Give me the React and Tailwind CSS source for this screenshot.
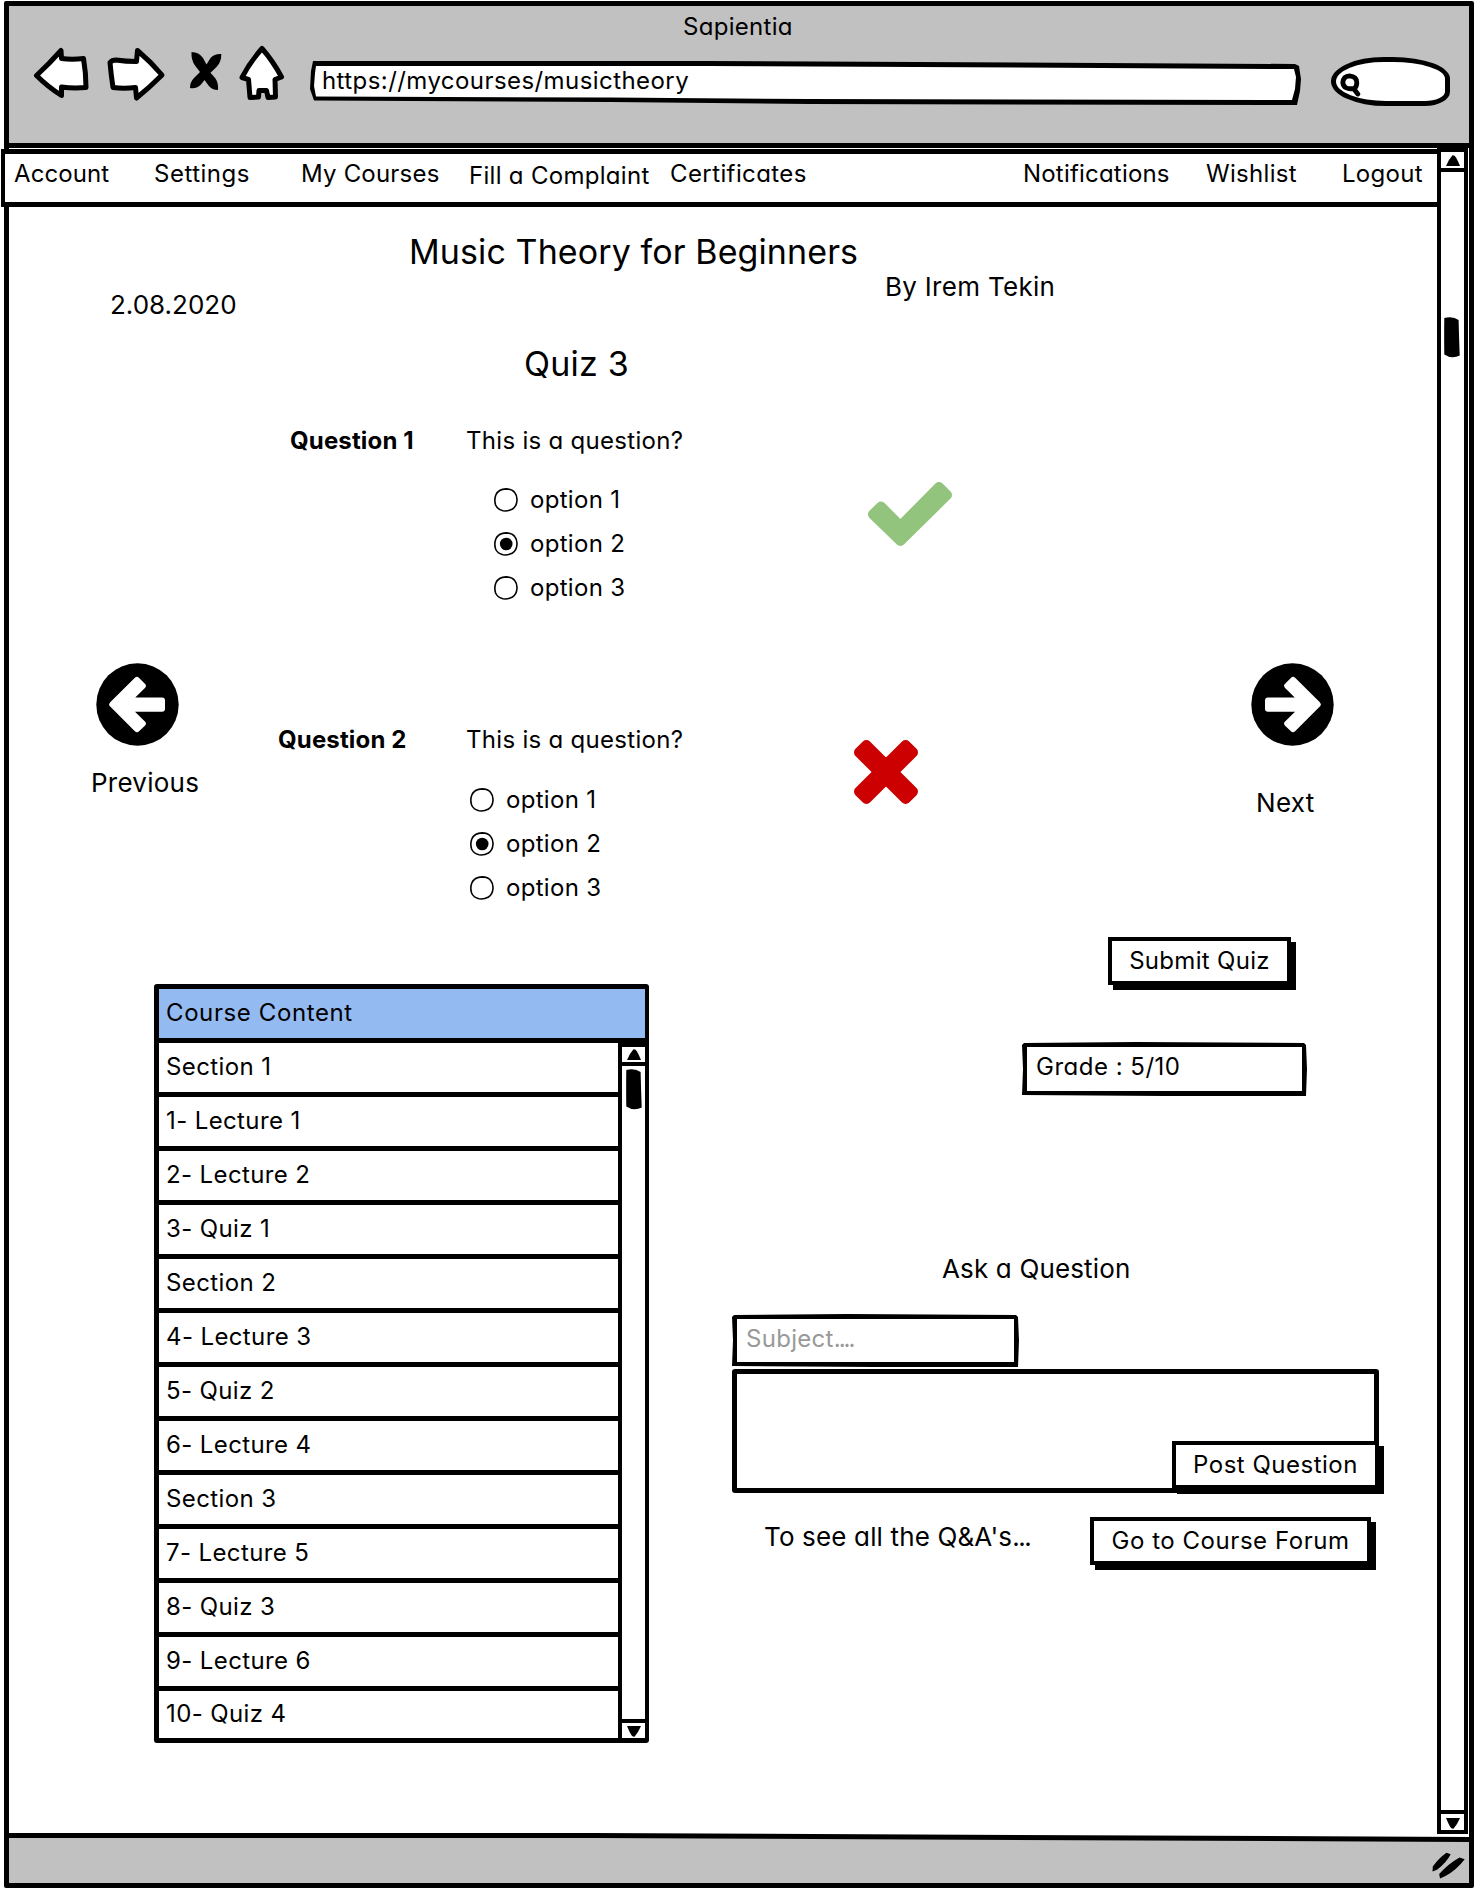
import React from "react";

/* ---------- browser chrome icons ---------- */

const BackIcon = () => (
  <svg className="block h-[54px] w-[56px]" viewBox="33 46 56 54" fill="white" stroke="black" strokeWidth="5" strokeLinejoin="round">
    <path d="M36.5 75.5 Q49 64 61 50.5 L61.5 58.5 Q72 60 83.5 58.5 Q86 73 86 87.5 Q73 88.5 61.5 87 L61.5 95.5 Q48 87 36.5 75.5Z" />
  </svg>
);

const ForwardIcon = () => (
  <svg className="block h-[56px] w-[60px]" viewBox="106 46 60 56" fill="white" stroke="black" strokeWidth="5" strokeLinejoin="round">
    <path d="M137.500 50.500 Q151 62 162 75 Q149 88 136.500 98 L135.500 87.500 Q124 89 113 87.500 Q111 74 110 62.500 Q112 60 116 60 Q126 61.500 136.500 61.500Z" />
  </svg>
);

const StopIcon = () => (
  <svg className="block h-[40px] w-[34px]" viewBox="188 51 34 40" fill="black">
    <path d="M191.500 52 Q199 52 203 58 L206.500 64.500 L210.500 58 Q214.500 53.500 221.300 54 Q221.500 62 216.500 67 L210.500 72.800 L215.500 78.500 Q218.500 83 218 90 Q212 90 208.500 85.500 L204.500 80 L201 84.500 Q197 89 190 88 Q190 82 194 78 L200 72 L195 65.500 Q191 60 191.500 52Z" />
  </svg>
);

const HomeIcon = () => (
  <svg className="block h-[56px] w-[48px]" viewBox="238 45 48 56" fill="white" stroke="black" strokeWidth="5" strokeLinejoin="round">
    <path d="M262 48.500 Q273 61 281.500 77 L275 79.500 L275.500 97 L268 97.500 L266.500 90.500 H259 L258.500 97 L250 97.500 L248.500 79.500 L242 77.500 Q250 62 262 48.500Z" />
  </svg>
);

const SearchIcon = () => (
  <svg className="block h-[24px] w-[21px]" viewBox="0 0 21 24" fill="white" stroke="black" strokeWidth="4.800" strokeLinecap="round" strokeLinejoin="round">
    <path d="M2.800 9.500 Q3.500 3 9.500 2.800 Q17 3.500 16.800 10 Q16.500 14.500 14 15.500 Q3.500 17 2.800 9.500Z M13.500 15.500 L17.800 21" />
  </svg>
);

/* ---------- page icons ---------- */

const CheckIcon = () => (
  <svg className="block h-[64px] w-[84px]" viewBox="0 0 84 64" fill="#93c47d" stroke="#93c47d" strokeWidth="10" strokeLinejoin="round">
    <path d="M5 32.300 L13 24.500 L32.400 44 L71 5 L79 13 L32.400 59Z" />
  </svg>
);

const CrossIcon = () => (
  <svg className="block h-[64px] w-[64px]" viewBox="0 0 64 64" fill="#cc0000" stroke="#cc0000" strokeWidth="10" strokeLinejoin="round">
    <path d="M5 12.400 L12.400 5 L32 24.600 L51.600 5 L59 12.400 L39.400 32 L59 51.600 L51.600 59 L32 39.400 L12.400 59 L5 51.600 L24.600 32Z" />
  </svg>
);

const CircleArrow = ({ flip }) => (
  <svg className={flip ? "block size-[83px] -scale-x-100" : "block size-[83px]"} viewBox="0 0 83 83">
    <circle cx="41.500" cy="41.500" r="41.200" fill="black" />
    <path
      d="M16.300 41.500 L41 17 L46.800 22.800 L31.800 37.600 H66 V45.800 H31.800 L46.800 60.600 L41 66.200Z"
      fill="white"
      stroke="white"
      strokeWidth="6"
      strokeLinejoin="round"
    />
  </svg>
);

const Triangle = ({ down }) => (
  <svg className={down ? "block h-[11px] w-[14px] rotate-180" : "block h-[11px] w-[14px]"} viewBox="0 0 14 11">
    <path d="M0 11 Q3 4 6.500 0.300 Q8.500 0 10 2.500 Q12 6 14 11Z" />
  </svg>
);

const Thumb = () => (
  <svg className="block h-[41px] w-[16px]" viewBox="0 0 16 41">
    <path d="M0.300 1 Q9 -1 14.600 3 Q15 20 15.700 38.500 Q8 42.500 0.300 37.500 Q0 20 0.300 1Z" />
  </svg>
);

const Resize = () => (
  <svg className="block h-[27px] w-[33px]" viewBox="0 0 33 27">
    <path d="M0.500 19.500 L0.800 14.500 Q7 6 14.500 0.800 L18.700 2.200 Q14.500 10.500 5 17.800Z M8 26.500 L7.200 22 Q16 12 27.500 5.500 L32.700 7.200 Q25 17.500 13.500 24Z" />
  </svg>
);

/* ---------- building blocks ---------- */

function Radio({ checked }) {
  return (
    <svg className="block size-[24px]" viewBox="0 0 24 24">
      <path
        d="M12 0.900 Q18 0.900 20.700 4.500 Q23.500 8 22.900 13 Q22.500 18.500 18.500 21 Q14 23.500 9 22.800 Q3.500 21.500 1.600 17 Q0 12 1.800 7 Q4.500 1 12 0.900Z"
        fill="white"
        stroke="black"
        strokeWidth="1.600"
      />
      {checked && <circle cx="12.200" cy="12" r="6.300" fill="black" />}
    </svg>
  );
}

function Options() {
  return (
    <div className="flex flex-col gap-[14px]">
      {[1, 2, 3].map((n) => (
        <label key={n} className="flex h-[30px] items-center gap-[12px]">
          <Radio checked={n === 2} />
          <span className="leading-[30px]">option {n}</span>
        </label>
      ))}
    </div>
  );
}

function SketchButton({ className, children }) {
  return (
    <button
      className={`block h-[48px] border-4 border-black bg-white text-center leading-[34px] whitespace-nowrap shadow-[5px_5px_0_0_#000] ${className}`}
    >
      {children}
    </button>
  );
}

function FieldBox({ className, children }) {
  return (
    <div
      className={`border-[5px] border-black pt-[5px] leading-[30px] [clip-path:polygon(0_3px,2px_1px,40%_0,calc(100%-3px)_1px,calc(100%-1px)_3px,100%_50%,calc(100%-1px)_100%,50%_100%,0_calc(100%-1px),1px_50%)] ${className}`}
    >
      {children}
    </div>
  );
}

const rows = [
  "Section 1",
  "1- Lecture 1",
  "2- Lecture 2",
  "3- Quiz 1",
  "Section 2",
  "4- Lecture 3",
  "5- Quiz 2",
  "6- Lecture 4",
  "Section 3",
  "7- Lecture 5",
  "8- Quiz 3",
  "9- Lecture 6",
  "10- Quiz 4",
];

function CourseContent() {
  return (
    <div className="h-[759px] w-[495px] rounded-[3px] border-[5px] border-r-4 border-black bg-white tracking-[0.38px]">
      <div className="h-[54px] border-b-[5px] border-black bg-[#94baf2] pt-[9px] pl-[7px] leading-[30px] tracking-[0.6px]">
        Course Content
      </div>
      <div className="flex h-[695px]">
        <div className="w-[459px]">
          {rows.map((r) => (
            <div key={r} className="h-[54px] border-b-[5px] border-black pt-[9px] pl-[7px] leading-[30px] last:border-b-0 last:pt-[8px]">
              {r}
            </div>
          ))}
        </div>
        <div className="flex w-[27px] flex-col border-l-4 border-black">
          <div className="flex h-[23px] items-center justify-center border-t-4 border-b-4 border-black pl-px">
            <Triangle />
          </div>
          <div className="flex flex-1 justify-center pt-[3px]">
            <Thumb />
          </div>
          <div className="flex h-[19px] items-center justify-center border-t-4 border-black pt-[2px] pl-px">
            <Triangle down />
          </div>
        </div>
      </div>
    </div>
  );
}

function Question({ label, labelClass, optionsClass, iconClass, icon }) {
  return (
    <div className="flex">
      <div className={`pt-px leading-[30px] font-bold tracking-[0.15px] whitespace-nowrap ${labelClass}`}>{label}</div>
      <div className="w-[387px]">
        <div className="pt-px leading-[30px] whitespace-nowrap">This is a question?</div>
        <div className={optionsClass}>
          <Options />
        </div>
      </div>
      <div className={iconClass}>{icon}</div>
    </div>
  );
}

export default function App() {
  return (
    <div className="h-[1890px] w-[1476px] overflow-hidden bg-white pt-px pl-1 font-['Inter','Lato',sans-serif] text-[24px] tracking-[0.3px] text-black [font-feature-settings:'cv11'_1]">
      <div className="flex h-[1887px] w-[1470px] flex-col rounded-[2px] border-[5px] border-black">
        {/* browser toolbar */}
        <header className="h-[142px] shrink-0 border-b-[5px] border-black bg-[#c1c1c1]">
          <div className="h-[38px] pt-[6px] pl-[674px] leading-[30px]">Sapientia</div>
          <div className="flex h-[64px] items-start">
            <div className="pt-[2px] pl-[24px]"><BackIcon /></div>
            <div className="pt-[2px] pl-[17px]"><ForwardIcon /></div>
            <div className="pt-[7px] pl-[22px]"><StopIcon /></div>
            <div className="pt-[1px] pl-[16px]"><HomeIcon /></div>
            <div className="mt-[17px] ml-[24px] h-[45px] w-[991px] bg-black p-px [clip-path:polygon(3px_0,40%_0,985px_3px,989px_5px,991px_18px,990px_30px,987px_44px,500px_43px,300px_41px,4px_39.500px,0_28px,1px_10px)]">
              <div className="h-[43px] bg-white pt-[4px] pl-[11px] leading-[30px] tracking-[0.43px] [clip-path:polygon(5px_4px,40%_4px,983px_7px,985px_15px,984px_27px,981px_38px,500px_37px,300px_35.500px,5px_34.500px,3px_24px,4px_11px)]">
                https://mycourses/musictheory
              </div>
            </div>
            <div className="mt-[13px] ml-[30px] flex h-[49px] w-[119px] items-start rounded-[46%_50%_22%_48%/52%_46%_30%_52%] border-[5px] border-black bg-white pt-[11px] pl-[4px]">
              <SearchIcon />
            </div>
          </div>
        </header>

        <div className="flex h-[1690px] shrink-0">
          <div className="w-[1428px] shrink-0">
            {/* navigation */}
            <nav className="relative mt-px -ml-[8px] flex h-[58px] w-[1440px] items-start border-x-[4px] border-y-[5px] border-black bg-white pt-[5px] leading-[30px] whitespace-nowrap">
              <span className="ml-[9px] w-[140px] tracking-[0.1px]">Account</span>
              <span className="w-[147px] tracking-[0.5px]">Settings</span>
              <span className="w-[168px] tracking-[0.2px]">My Courses</span>
              <span className="w-[201px] pt-[2px]">Fill a Complaint</span>
              <span className="w-[353px] tracking-[0.4px]">Certificates</span>
              <span className="w-[183px] tracking-[0.2px]">Notifications</span>
              <span className="w-[136px]">Wishlist</span>
              <span>Logout</span>
            </nav>

            <main>
              <div className="flex h-[112px] pt-[25px] text-[26px] leading-[30px] whitespace-nowrap">
                <span className="mt-[58px] ml-[101px] w-[299px] tracking-normal">2.08.2020</span>
                <h1 className="w-[476px] text-[34px] leading-[40px] tracking-[0.1px]">Music Theory for Beginners</h1>
                <span className="mt-[40px]">By Irem Tekin</span>
              </div>
              <h2 className="mt-[25px] ml-[515px] h-[40px] text-[34px] leading-[40px] tracking-[0.2px] whitespace-nowrap">Quiz 3</h2>

              <section className="mt-[41px] flex h-[511px]">
                <div className="mt-[238px] w-[185px] pl-[82px]">
                  <div className="pl-[5px]"><CircleArrow /></div>
                  <div className="mt-[22px] text-[26px] leading-[30px] tracking-[0.25px]">Previous</div>
                </div>
                <div className="w-[1057px] pl-[83px]">
                  <div className="h-[299px]">
                    <Question
                      label="Question 1"
                      labelClass="w-[176px] ml-[13px]"
                      optionsClass="mt-[29px] pl-[28px]"
                      iconClass="pt-[57px] pl-[15px]"
                      icon={<CheckIcon />}
                    />
                  </div>
                  <Question
                    label="Question 2"
                    labelClass="w-[188px] ml-px"
                    optionsClass="mt-[30px] pl-[4px]"
                    iconClass="pt-[16px] pl-px"
                    icon={<CrossIcon />}
                  />
                </div>
                <div className="mt-[238px]">
                  <CircleArrow flip />
                  <div className="mt-[42px] pl-[5px] text-[26px] leading-[30px]">Next</div>
                </div>
              </section>

              <section className="flex">
                <div className="mt-[48px] ml-[145px] w-[578px]">
                  <CourseContent />
                </div>
                <div className="w-[660px]">
                  <SketchButton className="mt-px ml-[376px] w-[183px]">Submit Quiz</SketchButton>
                  <FieldBox className="mt-[57px] ml-[290px] h-[54px] w-[285px] pl-[9px] tracking-[0.5px]">Grade : 5/10</FieldBox>
                  <h3 className="mt-[158px] ml-[210px] text-[26px] leading-[30px] tracking-[0.15px]">Ask a Question</h3>
                  <FieldBox className="mt-[30px] h-[53px] w-[287px] pl-[9px] text-[#999999]">
                    Subject<span className="tracking-[-2px]">....</span>
                  </FieldBox>
                  <div className="mt-[2px] flex h-[124px] w-[647px] rounded-[3px] border-[5px] border-black">
                    <SketchButton className="-mr-[5px] mt-[67px] ml-auto w-[207px] shrink-0 tracking-[0.5px]">Post Question</SketchButton>
                  </div>
                  <div className="mt-[23px] flex">
                    <span className="mt-[6px] ml-[32px] w-[326px] text-[26px] leading-[30px] tracking-[0.15px] whitespace-nowrap">
                      To see all the Q&A's<span className="tracking-[-1.5px]">...</span>
                    </span>
                    <SketchButton className="mt-px w-[281px] tracking-[0.55px]">Go to Course Forum</SketchButton>
                  </div>
                </div>
              </section>
            </main>
          </div>

          {/* page scrollbar */}
          <div className="flex h-[1686px] w-[31px] flex-col border-4 border-black bg-white">
            <div className="flex h-[20px] items-center justify-center border-b-4 border-black">
              <Triangle />
            </div>
            <div className="flex flex-1 justify-center pt-[145px] pr-[2px]">
              <Thumb />
            </div>
            <div className="flex h-[20px] items-center justify-center border-t-4 border-black pt-[2px]">
              <Triangle down />
            </div>
          </div>
        </div>

        {/* status bar */}
        <footer className="-mt-[5px] flex h-[50px] shrink-0 bg-black [clip-path:polygon(0_0,40%_0,100%_4px,100%_100%,0_100%)]">
          <div className="flex w-full justify-end bg-[#c1c1c1] pt-[19px] pr-[4px] [clip-path:polygon(0_5px,40%_5px,100%_9px,100%_100%,0_100%)]">
            <Resize />
          </div>
        </footer>
      </div>
    </div>
  );
}
